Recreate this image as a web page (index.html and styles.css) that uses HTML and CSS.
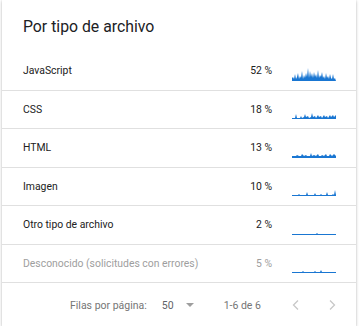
FILE: index.html
```html
<!DOCTYPE html>
<html lang="es">
<head>
<meta charset="utf-8">
<link rel="stylesheet" href="styles.css">
</head>
<body>
<div class="card">
  <div class="title">Por tipo de archivo</div>
  <div class="rows">
    <div class="row">
      <span class="label">JavaScript</span>
      <span class="pct">52 %</span>
      <svg class="spark" width="44" height="16" viewBox="0 0 44 16"><path d="M0 16 L0 13 L1 12 L2 14 L3 9 L4 14 L5 12 L6 8 L7 14 L8 11 L9 13 L10 6 L11 14 L12 10 L13 13 L14 8 L15 12 L16 3 L17 13 L18 6 L19 12 L20 8 L21 13 L22 7 L23 12 L24 9 L25 13 L26 5 L27 13 L28 10 L29 12 L30 7 L31 13 L32 11 L33 14 L34 8 L35 13 L36 11 L37 14 L38 9 L39 13 L40 14 L41 9 L42 14 L43 13 L44 16 Z" fill="#1976d2"/></svg>
    </div>
    <div class="row">
      <span class="label">CSS</span>
      <span class="pct">18 %</span>
      <svg class="spark" width="44" height="16" viewBox="0 0 44 16"><path d="M0 16 L0 15 L3 15 L4 11 L5 15 L8 15 L9 13 L10 15 L12 14 L13 11 L14 14 L16 13 L17 15 L19 14 L20 10 L21 14 L23 13 L24 15 L26 12 L27 14 L29 13 L30 15 L32 12 L33 14 L35 13 L36 15 L38 12 L39 14 L41 12 L42 14 L44 12 L44 16 Z" fill="#1976d2"/></svg>
    </div>
    <div class="row">
      <span class="label">HTML</span>
      <span class="pct">13 %</span>
      <svg class="spark" width="44" height="16" viewBox="0 0 44 16"><path d="M0 16 L0 14 L4 14 L5 13 L7 14 L9 14 L10 12 L12 14 L14 13 L15 14 L18 14 L19 11 L20 14 L22 13 L24 14 L26 12 L27 14 L29 14 L30 13 L32 14 L34 12 L35 14 L37 14 L38 12 L40 14 L42 12 L44 14 L44 16 Z" fill="#1976d2"/></svg>
    </div>
    <div class="row">
      <span class="label">Imagen</span>
      <span class="pct">10 %</span>
      <svg class="spark" width="44" height="16" viewBox="0 0 44 16"><path d="M0 16 L0 15 L6 15 L7 14 L8 15 L14 15 L15 12 L16 15 L22 15 L23 13 L24 15 L28 15 L29 14 L30 15 L34 15 L35 12 L36 15 L40 15 L41 14 L42 15 L43 10 L44 15 L44 16 Z" fill="#1976d2"/></svg>
    </div>
    <div class="row">
      <span class="label">Otro tipo de archivo</span>
      <span class="pct">2 %</span>
      <svg class="spark" width="44" height="16" viewBox="0 0 44 16"><path d="M0 16 L0 15 L24 15 L25 14 L26 15 L44 15 L44 16 Z" fill="#1976d2"/></svg>
    </div>
    <div class="row muted">
      <span class="label">Desconocido (solicitudes con errores)</span>
      <span class="pct">5 %</span>
      <svg class="spark" width="44" height="16" viewBox="0 0 44 16"><path d="M0 16 L0 15 L10 15 L11 14 L12 15 L22 15 L23 14 L24 15 L28 15 L29 13 L30 15 L44 15 L44 16 Z" fill="#1976d2"/></svg>
    </div>
  </div>
  <div class="footer">
    <span class="f-label">Filas por página:</span>
    <span class="f-select">50 <span class="caret"></span></span>
    <span class="f-range">1-6 de 6</span>
    <span class="f-nav">
      <svg width="12" height="12" viewBox="0 0 12 12"><path d="M8 1.5 L3.5 6 L8 10.5" fill="none" stroke="#c8c8c8" stroke-width="1.3"/></svg>
      <svg width="12" height="12" viewBox="0 0 12 12"><path d="M4 1.5 L8.5 6 L4 10.5" fill="none" stroke="#c8c8c8" stroke-width="1.3"/></svg>
    </span>
  </div>
</div>
</body>
</html>
```

FILE: styles.css
```css
html, body {
  margin: 0;
  padding: 0;
  background: #fff;
}
body {
  font-family: Roboto, "Noto Sans", sans-serif;
  color: #212121;
}
.card {
  width: 354px;
  height: 326px;
  margin-left: 2px;
  background: #fff;
  box-shadow: 0 1px 3px rgba(0,0,0,0.25), 0 0 1px rgba(0,0,0,0.12);
  box-sizing: border-box;
  display: flex;
  flex-direction: column;
}
.title {
  height: 52px;
  box-sizing: border-box;
  padding: 16px 0 0 21px;
  font-size: 15.8px;
  line-height: 22px;
  color: #202124;
}
.row {
  height: 38.5px;
  border-bottom: 1px solid #e0e0e0;
  box-sizing: border-box;
  display: flex;
  align-items: center;
  padding: 0 20px 0 21px;
  font-size: 10.4px;
}
.label {
  flex: 1;
}
.pct {
  width: 40px;
  text-align: right;
}
.spark {
  margin-left: 20px;
  margin-top: 4px;
  display: block;
}
.muted {
  color: #9e9e9e;
}
.footer {
  flex: 1;
  display: flex;
  align-items: center;
  font-size: 10.5px;
  color: #757575;
  padding-top: 1px;
}
.f-label {
  margin-left: 68px;
}
.f-select {
  margin-left: 15px;
  display: flex;
  align-items: center;
  color: #5f6368;
}
.caret {
  display: inline-block;
  width: 0;
  height: 0;
  border-left: 4px solid transparent;
  border-right: 4px solid transparent;
  border-top: 4px solid #9e9e9e;
  margin-left: 12px;
}
.f-range {
  margin-left: 30px;
}
.f-nav {
  display: flex;
  gap: 24px;
  margin-left: 29px;
}
.f-nav svg {
  display: block;
}
```
